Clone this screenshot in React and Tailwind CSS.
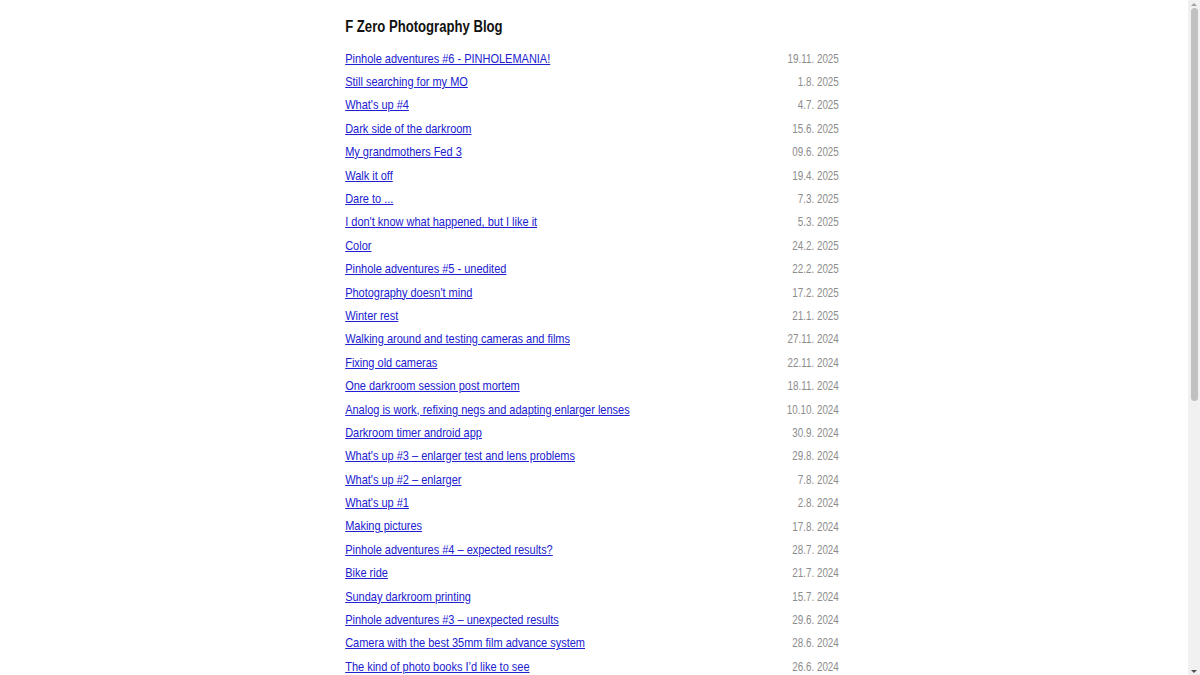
import React from "react";

const posts = [
  ["Pinhole adventures #6 - PINHOLEMANIA!", "19.11. 2025"],
  ["Still searching for my MO", "1.8. 2025"],
  ["What's up #4", "4.7. 2025"],
  ["Dark side of the darkroom", "15.6. 2025"],
  ["My grandmothers Fed 3", "09.6. 2025"],
  ["Walk it off", "19.4. 2025"],
  ["Dare to ...", "7.3. 2025"],
  ["I don't know what happened, but I like it", "5.3. 2025"],
  ["Color", "24.2. 2025"],
  ["Pinhole adventures #5 - unedited", "22.2. 2025"],
  ["Photography doesn't mind", "17.2. 2025"],
  ["Winter rest", "21.1. 2025"],
  ["Walking around and testing cameras and films", "27.11. 2024"],
  ["Fixing old cameras", "22.11. 2024"],
  ["One darkroom session post mortem", "18.11. 2024"],
  ["Analog is work, refixing negs and adapting enlarger lenses", "10.10. 2024"],
  ["Darkroom timer android app", "30.9. 2024"],
  ["What's up #3 – enlarger test and lens problems", "29.8. 2024"],
  ["What's up #2 – enlarger", "7.8. 2024"],
  ["What's up #1", "2.8. 2024"],
  ["Making pictures", "17.8. 2024"],
  ["Pinhole adventures #4 – expected results?", "28.7. 2024"],
  ["Bike ride", "21.7. 2024"],
  ["Sunday darkroom printing", "15.7. 2024"],
  ["Pinhole adventures #3 – unexpected results", "29.6. 2024"],
  ["Camera with the best 35mm film advance system", "28.6. 2024"],
  ["The kind of photo books I’d like to see", "26.6. 2024"],
  ["Pinhole adventures #2", "20.6. 2024"],
  ["First rolls from the pinhole", "14.6. 2024"],
  ["Pinhole adventures #1", "9.6. 2024"],
  ["Developing at home", "2.6. 2024"],
  ["Back to film", "25.5. 2024"],
  ["Hello world", "20.5. 2024"],
];

const App = () => {
  return (
    <div
      className="min-h-screen bg-white pr-[16px] overflow-hidden"
      style={{ fontFamily: '"Liberation Sans", Arial, sans-serif' }}
    >
      {/* the page is a bit narrow-set: squeeze the column horizontally */}
      <div className="w-[602px] mx-auto pt-[17px] pb-10 scale-x-[0.82] origin-center">
        <h1 className="text-[16px] leading-[20px] font-bold text-[#111] mb-[10px]">
          F Zero Photography Blog
        </h1>

        <ul>
          {posts.map(([title, date]) => (
            <li key={title} className="flex justify-between items-center h-[23.4px]">
              <a href="#" className="text-[13.4px] text-[#2020d0] underline">
                {title}
              </a>
              <span className="text-[12px] text-[#8c8c8c]">{date}</span>
            </li>
          ))}
        </ul>
      </div>

      {/* scrollbar */}
      <div className="fixed top-0 right-0 w-[12px] h-screen bg-[#f1f1f1] flex flex-col items-center">
        <div className="h-[8px] w-full flex items-center justify-center">
          <div className="w-0 h-0 border-l-[3px] border-r-[3px] border-b-[3px] border-l-transparent border-r-transparent border-b-[#a3a3a3]" />
        </div>
        <div className="w-[7px] h-[393px] rounded-full bg-[#c1c1c1]" />
        <div className="flex-1" />
        <div className="h-[8px] w-full flex items-center justify-center">
          <div className="w-0 h-0 border-l-[3px] border-r-[3px] border-t-[3px] border-l-transparent border-r-transparent border-t-[#505050]" />
        </div>
      </div>
    </div>
  );
};

export default App;
